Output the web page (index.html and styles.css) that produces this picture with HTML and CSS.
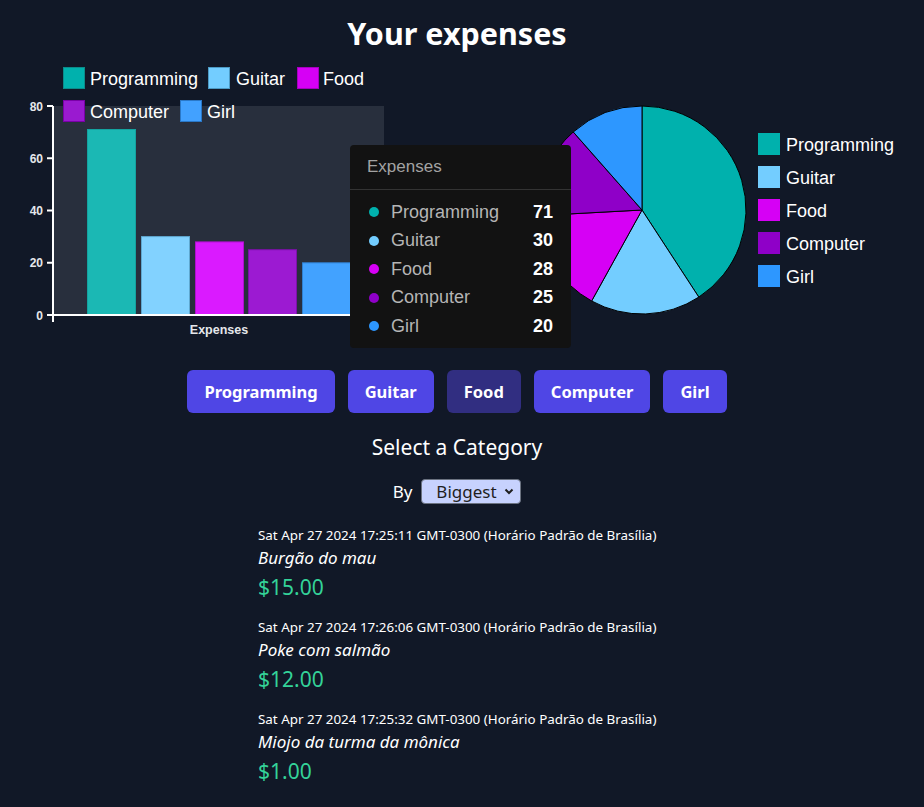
FILE: index.html
```html
<!DOCTYPE html>
<html lang="en">
<head>
<meta charset="utf-8">
<title>Your expenses</title>
<link rel="stylesheet" href="styles.css">
</head>
<body>
<main class="page">
  <h1 class="title">Your expenses</h1>

  <section class="charts">
    <svg class="bar-chart" width="390" height="290" viewBox="0 0 390 290">
      <rect x="53" y="46" width="331" height="209" fill="#282f3d"/>
      <g class="legend">
        <rect x="63.5" y="7.5" width="21" height="21" fill="#00b1ad" stroke="#0b8c8a"/>
        <text x="90" y="24.5">Programming</text>
        <rect x="208.5" y="7.5" width="21" height="21" fill="#73cdff" stroke="#4c9ac4"/>
        <text x="236" y="24.5">Guitar</text>
        <rect x="297.5" y="7.5" width="21" height="21" fill="#d600f5" stroke="#a600be"/>
        <text x="323" y="24.5">Food</text>
        <rect x="63.5" y="40.5" width="21" height="21" fill="#9a1ad0" stroke="#7a00a8"/>
        <text x="90" y="57.5">Computer</text>
        <rect x="180.5" y="40.5" width="21" height="21" fill="#42a1ff" stroke="#2a78c8"/>
        <text x="207" y="57.5">Girl</text>
      </g>
      <g class="bars">
        <rect x="87.5" y="69.5" width="48" height="185.5" fill="#1bb8b4" stroke="#14a3a0"/>
        <rect x="141.5" y="176.6" width="48" height="78.4" fill="#82d2ff" stroke="#5fa8d0"/>
        <rect x="195.5" y="181.9" width="48" height="73.1" fill="#da1aff" stroke="#b10fd0"/>
        <rect x="248.5" y="189.7" width="48" height="65.3" fill="#9c1ad2" stroke="#7c10aa"/>
        <rect x="302.5" y="202.8" width="48" height="52.2" fill="#42a2ff" stroke="#2f80d0"/>
      </g>
      <g class="axis" stroke="#ffffff" stroke-width="2">
        <line x1="53" y1="46" x2="53" y2="262"/>
        <line x1="47" y1="255" x2="384" y2="255"/>
        <line x1="47" y1="46" x2="53" y2="46"/>
        <line x1="47" y1="98.25" x2="53" y2="98.25"/>
        <line x1="47" y1="150.5" x2="53" y2="150.5"/>
        <line x1="47" y1="202.75" x2="53" y2="202.75"/>
      </g>
      <g class="ticks">
        <text x="43" y="50.5">80</text>
        <text x="43" y="102.5">60</text>
        <text x="43" y="155">40</text>
        <text x="43" y="207">20</text>
        <text x="43" y="259.5">0</text>
      </g>
      <text class="axis-title" x="219" y="274">Expenses</text>
    </svg>

    <svg class="pie-chart" width="534" height="290" viewBox="0 0 534 290">
      <g stroke="#000" stroke-width="1" stroke-linejoin="round">
        <path d="M252 150 L252 46 A104 104 0 0 1 308.80 237.12 Z" fill="#00b1ad"/>
        <path d="M252 150 L308.80 237.12 A104 104 0 0 1 201.63 240.99 Z" fill="#73cdff"/>
        <path d="M252 150 L201.63 240.99 A104 104 0 0 1 148.15 155.63 Z" fill="#d600f5"/>
        <path d="M252 150 L148.15 155.63 A104 104 0 0 1 183.26 71.96 Z" fill="#8f00c8"/>
        <path d="M252 150 L183.26 71.96 A104 104 0 0 1 252 46 Z" fill="#2d97ff"/>
      </g>
      <g class="legend">
        <rect x="368" y="73" width="22" height="22" fill="#00b1ad"/>
        <text x="396" y="90.5">Programming</text>
        <rect x="368" y="106" width="22" height="22" fill="#73cdff"/>
        <text x="396" y="123.5">Guitar</text>
        <rect x="368" y="139" width="22" height="22" fill="#d600f5"/>
        <text x="396" y="156.5">Food</text>
        <rect x="368" y="172" width="22" height="22" fill="#8f00c8"/>
        <text x="396" y="189.5">Computer</text>
        <rect x="368" y="205" width="22" height="22" fill="#2d97ff"/>
        <text x="396" y="222.5">Girl</text>
      </g>
    </svg>

    <div class="tooltip">
      <div class="tooltip-head">Expenses</div>
      <ul class="tooltip-list">
        <li class="tooltip-row"><span class="dot dot-prog"></span><span class="t-label">Programming</span><span class="t-value">71</span></li>
        <li class="tooltip-row"><span class="dot dot-guitar"></span><span class="t-label">Guitar</span><span class="t-value">30</span></li>
        <li class="tooltip-row"><span class="dot dot-food"></span><span class="t-label">Food</span><span class="t-value">28</span></li>
        <li class="tooltip-row"><span class="dot dot-computer"></span><span class="t-label">Computer</span><span class="t-value">25</span></li>
        <li class="tooltip-row"><span class="dot dot-girl"></span><span class="t-label">Girl</span><span class="t-value">20</span></li>
      </ul>
    </div>
  </section>

  <nav class="categories">
    <button class="cat-btn">Programming</button>
    <button class="cat-btn">Guitar</button>
    <button class="cat-btn cat-btn-active">Food</button>
    <button class="cat-btn">Computer</button>
    <button class="cat-btn">Girl</button>
  </nav>

  <h2 class="subtitle">Select a Category</h2>

  <div class="sort">
    <label class="sort-label" for="order">By</label>
    <div class="select-wrap">
      <select id="order" class="sort-select">
        <option>Biggest</option>
        <option>Smallest</option>
      </select>
      <svg class="chevron" width="10" height="7" viewBox="0 0 10 7"><path d="M1.5 1.5 L5 5 L8.5 1.5" fill="none" stroke="#1f1f1f" stroke-width="2"/></svg>
    </div>
  </div>

  <ul class="expenses">
    <li class="expense">
      <div class="exp-date">Sat Apr 27 2024 17:25:11 GMT-0300 (Horário Padrão de Brasília)</div>
      <div class="exp-name">Burgão do mau</div>
      <div class="exp-amount">$15.00</div>
    </li>
    <li class="expense">
      <div class="exp-date">Sat Apr 27 2024 17:26:06 GMT-0300 (Horário Padrão de Brasília)</div>
      <div class="exp-name">Poke com salmão</div>
      <div class="exp-amount">$12.00</div>
    </li>
    <li class="expense">
      <div class="exp-date">Sat Apr 27 2024 17:25:32 GMT-0300 (Horário Padrão de Brasília)</div>
      <div class="exp-name">Miojo da turma da mônica</div>
      <div class="exp-amount">$1.00</div>
    </li>
  </ul>
</main>
</body>
</html>
```

FILE: styles.css
```css
* { box-sizing: border-box; }

html, body {
  margin: 0;
  padding: 0;
  background: #111827;
  color: #ffffff;
  font-family: "Noto Sans", "Open Sans", sans-serif;
}

.page {
  width: 914px;
  display: flex;
  flex-direction: column;
  align-items: center;
  padding-top: 12px;
}

.title {
  margin: 0;
  font-size: 30.5px;
  line-height: 42px;
  font-weight: 700;
}

.charts {
  position: relative;
  width: 924px;
  height: 290px;
  margin-top: 6px;
  align-self: flex-start;
  display: flex;
}

.bar-chart, .pie-chart {
  display: block;
  font-family: "Liberation Sans", Arial, sans-serif;
}

.legend text {
  fill: #ffffff;
  font-size: 18px;
}

.ticks text {
  fill: #e5e7eb;
  font-size: 12px;
  font-weight: 700;
  text-anchor: end;
}

.axis-title {
  fill: #e5e7eb;
  font-size: 12.5px;
  font-weight: 700;
  text-anchor: middle;
}

.tooltip {
  position: absolute;
  left: 350px;
  top: 85px;
  width: 221px;
  height: 203px;
  background: #121212;
  border-radius: 4px;
  font-family: "Liberation Sans", Arial, sans-serif;
}

.tooltip-head {
  height: 45px;
  padding: 12px 0 0 17px;
  font-size: 17px;
  color: #a3a3a3;
  border-bottom: 1px solid #333333;
}

.tooltip-list {
  list-style: none;
  margin: 0;
  padding: 8px 18px 0 19px;
}

.tooltip-row {
  display: flex;
  align-items: center;
  height: 28.5px;
  font-size: 18px;
}

.dot {
  width: 10px;
  height: 10px;
  border-radius: 50%;
  margin-right: 12px;
}
.dot-prog { background: #00b1ad; }
.dot-guitar { background: #73cdff; }
.dot-food { background: #d600f5; }
.dot-computer { background: #8f00c8; }
.dot-girl { background: #2d97ff; }

.t-label {
  flex: 1;
  color: #b5b5b5;
}

.t-value {
  color: #ffffff;
  font-weight: 700;
}

.categories {
  display: flex;
  gap: 13px;
  margin-top: 20px;
}

.cat-btn {
  height: 43px;
  padding: 0 17px;
  border: none;
  border-radius: 6px;
  background: #4f46e5;
  color: #ffffff;
  font-family: "Noto Sans", "Open Sans", sans-serif;
  font-size: 16.5px;
  font-weight: 700;
}

.cat-btn-active {
  background: #312e81;
}

.subtitle {
  margin: 17px 0 0;
  font-size: 21px;
  line-height: 34px;
  font-weight: 400;
}

.sort {
  display: flex;
  align-items: center;
  gap: 9px;
  margin-top: 15px;
}

.sort-label {
  font-size: 17px;
}

.select-wrap {
  position: relative;
}

.sort-select {
  appearance: none;
  -webkit-appearance: none;
  display: block;
  width: 100px;
  height: 25px;
  padding: 0 0 0 14px;
  border: 1px solid #6b7280;
  border-radius: 4px;
  background: #c7d2fe;
  color: #1f1f1f;
  font-family: "Noto Sans", "Open Sans", sans-serif;
  font-size: 17px;
  line-height: 23px;
}

.chevron {
  position: absolute;
  right: 7px;
  top: 9px;
  pointer-events: none;
}

.expenses {
  list-style: none;
  margin: 21px 0 0;
  padding: 0;
  width: 398px;
}

.expense {
  height: 92px;
}

.exp-date {
  font-size: 13.4px;
  line-height: 20px;
  white-space: nowrap;
}

.exp-name {
  font-size: 17px;
  font-style: italic;
  line-height: 26px;
}

.exp-amount {
  font-size: 21px;
  line-height: 33px;
  color: #34d399;
}
```
